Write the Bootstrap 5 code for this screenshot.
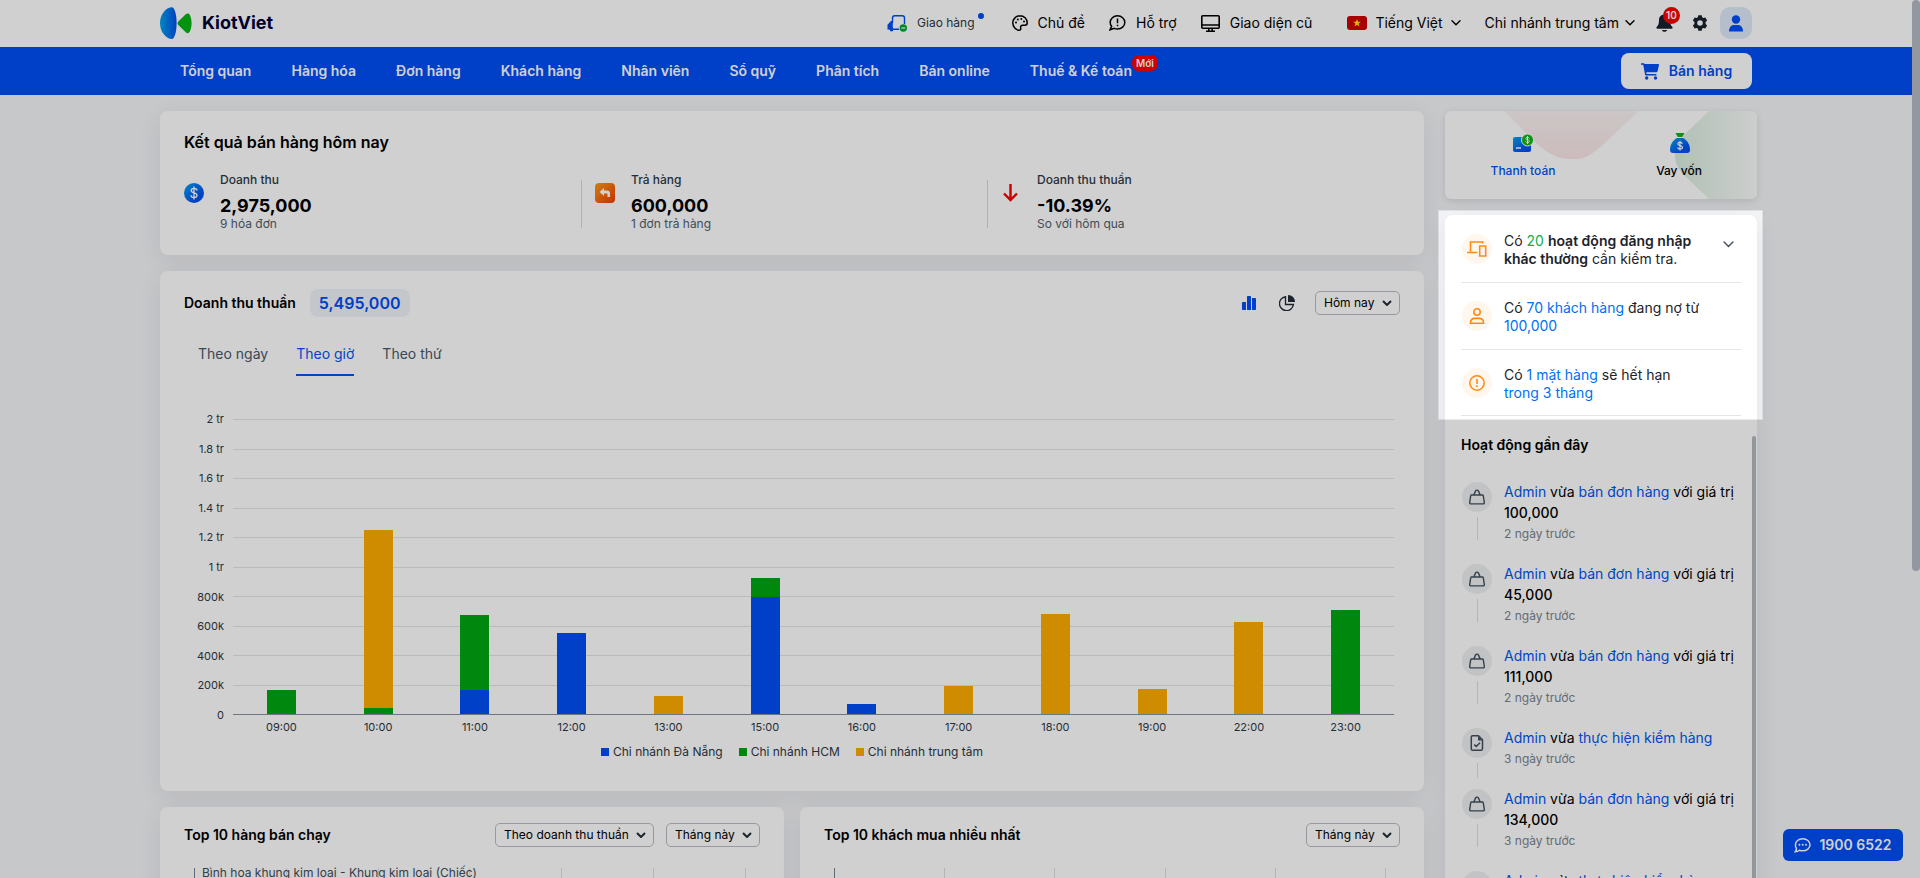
<!DOCTYPE html>
<html lang="vi">
<head>
<meta charset="utf-8">
<meta name="viewport" content="width=device-width, initial-scale=1">
<title>KiotViet - Tổng quan</title>
<link rel="stylesheet" href="https://cdn.jsdelivr.net/npm/bootstrap@5.3.0/dist/css/bootstrap.min.css">
<style>
:root{--kv-blue:#004ef5;--kv-link:#0055f5;--kv-green:#00a612;--kv-amber:#ffac00;--kv-line:#e2e4e6}
html{height:100%}
body{height:100%;overflow:hidden;background:#f4f5f8;color:#000;font-family:Inter,"Noto Sans",sans-serif;font-size:14px;line-height:18px;padding-right:8px}
a{text-decoration:none}
svg{flex:none;display:block}
.shell{max-width:1592px;margin:0 auto}
.topbar{height:47px;background:#fff;margin-right:-8px;padding:0 8px 1px 0}
.brand-link{gap:10px}
.brand-name{font-size:18px;font-weight:700;color:#00003a}
.topbar a.toplink,.topbar button{color:#000;background:none;border:0;padding:0;display:flex;align-items:center;gap:10px;font-size:14px;margin-left:24px}
.topbar a.delivery{font-size:12px;color:#2e3844}
.topbar a.theme{margin-left:37px}
.topbar .lang{margin-left:35px;gap:8px}
.topbar .branch{gap:6px}
.topbar .bell{margin-left:21px}
.topbar .gear{margin-left:19px}
.topbar .avatar-btn{width:32px;height:32px;margin-left:12px;justify-content:center;border-radius:10px;background:#deebfb}
.count{position:absolute;left:7px;top:-7px;width:17px;height:17px;border-radius:50%;background:#fc0000;color:#fff;font-size:10px;font-weight:600;line-height:17px;text-align:center}
.dot{position:absolute;right:-9px;top:-1px;width:6px;height:6px;border-radius:50%;background:var(--kv-blue)}
.mainnav{height:48px;background:var(--kv-blue);margin-right:-8px;padding-right:8px}
.mainnav .nav-link{color:#fff;font-weight:600;padding:0 20px;line-height:48px;position:relative}
.new-tag{position:absolute;right:-6px;top:8px;height:16px;padding:0 4px;border-radius:7px;background:#ff0000;font-size:10px;line-height:16px}
.sell{width:131px;height:36px;gap:10px;background:#fff;color:var(--kv-blue);font-weight:600;font-size:14px;border-radius:8px;border:0}
.columns{gap:21px}
.panel{background:#fff;border-radius:8px;box-shadow:0 6px 24px rgba(20,25,35,.08)}
.summary{padding:20px 24px 27px}
.summary h2{font-size:16px;line-height:22px;margin-bottom:27px}
.revenue{padding:18px 24px 30px}
.side{width:312px;margin-right:-5px;flex:none}
.stats{display:grid;grid-template-columns:397fr 406fr 413fr}
.stat-item{display:flex;gap:16px;height:48px}
.stat-item+.stat-item{border-left:1px solid #d8dadc;padding-left:13px}
.stat-item svg{margin-top:3px}
.stat-item>div{margin-top:-9px}
.stat-item .cap{font-size:12px;font-weight:500;color:#2e3a48}
.stat-item .big{font-size:18px;font-weight:700;line-height:26px;padding-top:4px}
.stat-item .sub{font-size:12px;line-height:10px;color:#505e6c}
h2{font-size:14px;font-weight:600;line-height:18px;margin:0}
.pill{background:#f0f4fb;color:var(--kv-blue);font-size:16px;font-weight:600;line-height:28px;border-radius:8px;padding:0 9px;margin-left:14px}
.pick{appearance:none;height:24px;border:1px solid #b8bcc4;border-radius:5px;font-size:12px;line-height:20px;color:#000;padding:0 24px 0 8px;background:url("data:image/svg+xml,%3Csvg xmlns='http://www.w3.org/2000/svg' width='10' height='6' fill='none' stroke='%23222c38' stroke-width='2'%3E%3Cpath d='M1 1l4 4 4-4'/%3E%3C/svg%3E") no-repeat right 7px center #fff}
.iconbtn{border:0;background:none;padding:0;color:#222c38}
.pie{margin:0 20px 0 23px}
.tabs{display:flex;gap:28px;padding-left:14px;margin-top:27px}
.tabs button{border:0;border-bottom:2px solid transparent;background:none;padding:0 0 10px;line-height:20px;color:#4a5868}
.tabs button.on{color:var(--kv-link);border-color:var(--kv-link)}
.chart{display:grid;grid-template-columns:40px 1fr;column-gap:9px;padding-right:6px;margin-top:35px}
.ylab{height:312px;display:flex;flex-direction:column;justify-content:space-between;text-align:right;font-size:11px;line-height:16px;color:#2e3844}
.plot{display:grid;height:296px;margin-top:8px}
.plot>*{grid-area:1/1}
.rules{display:flex;flex-direction:column;border-bottom:1px solid #8890a0}
.rules i{flex:1;border-top:1px solid var(--kv-line)}
.bars,.xlab{display:flex}
.bars>div{flex:1;display:flex;flex-direction:column;justify-content:flex-end;align-items:center;padding-bottom:1px}
.bars i{width:29px}
.b{background:var(--kv-blue)}.g{background:var(--kv-green)}.o{background:var(--kv-amber)}
.xlab{grid-column:2;font-size:11px;line-height:16px;color:#2e3844;margin-top:-4px}
.xlab span{flex:1;text-align:center}
.legend{font-size:12px;color:#2e3844;gap:16px;margin-top:8px}
.legend i{width:8px;height:8px;margin-right:4px}
.tophead{gap:12px;margin-bottom:21px}
.hplot{height:60px;display:flex;border-left:1px solid #7a828e;margin:0 14px 0 10px}
.hplot i{flex:1;border-right:1px solid #dcdee2}
.hname{position:absolute;left:18px;top:-4px;font-size:12px;color:#414d5a}
.services{height:88px;display:grid;grid-template-columns:1fr 1fr;position:relative;overflow:hidden;box-shadow:0 2px 6px rgba(20,25,35,.12);border-radius:6px}
.services>svg{position:absolute;inset:0;width:100%;height:100%}
.services a{position:relative;display:flex;flex-direction:column;align-items:center;gap:8px;padding-top:21px;font-size:12px;font-weight:500;color:#000}
.services a.on{color:var(--kv-link)}
/* spotlight: dims everything outside the notices */
.notices{position:relative;padding:1px 16px 0}
.notices::after{content:"";position:absolute;inset:-5px -6px -4px -7px;box-shadow:inset 0 0 0 1px rgba(0,0,0,.08),0 0 0 4000px rgba(0,0,0,.184);z-index:2000;pointer-events:none}
.notice{height:67px;border-bottom:1px solid #e3e5e8;display:flex;align-items:center;gap:12px;padding:0 0 0 1px;color:#1d232b}
.notice:last-child{height:66px}
.notice a{color:#0070f4}
.notice .hit{color:#10b04a}
.notice p,.act p{margin:0;flex:1}
.notice p{padding-top:2px}
.notice .iconbtn{padding:25px 7px 0 13px;color:#4a5460}
.ring{width:30px;height:30px;border-radius:50%;display:flex;align-items:center;justify-content:center;flex:none}
.notice .ring{background:#fff6ee;color:#ff8a14}
.recent{padding:20px 16px 0}
.recent h2{margin-bottom:27px}
.act{display:flex;gap:12px;padding-left:1px}
.act p{line-height:21px;padding-bottom:18px}
.act .ring{background:#edeff1;color:#44505e;margin-top:1px}
.act .stem{width:1px;height:23px;background:#dcdee0;margin:5px auto 0}
.act .stem.short{height:15px}
.act a{color:var(--kv-link)}
.act b{font-weight:500}
.act time{display:block;font-size:12px;line-height:22px;color:#7a8490}
.inner-thumb{position:absolute;right:1px;top:221px;bottom:0;width:4px;border-radius:4px;background:#b4bac2}
.page-thumb{position:fixed;right:0;top:0;width:8px;height:65%;border-radius:4px;background:#b4bac4}
.hotline{position:fixed;right:17px;bottom:17px;width:120px;height:32px;border:0;border-radius:6px;background:var(--kv-blue);color:#fff;font-weight:600;font-size:14px}
</style>
</head>
<body>
<svg width="0" height="0" class="position-absolute" aria-hidden="true">
<defs>
<linearGradient id="gb" x1="0" y1="0" x2="1" y2="1"><stop offset="0" stop-color="#0aa5ee"/><stop offset=".7" stop-color="#0052f0"/></linearGradient>
<linearGradient id="gl" x1="0" y1="0" x2="1" y2="0"><stop offset="0" stop-color="#00a5ee"/><stop offset="1" stop-color="#0050ec"/></linearGradient>
<linearGradient id="go" x1="0" y1="0" x2="1" y2="1"><stop offset="0" stop-color="#ff9d1a"/><stop offset="1" stop-color="#f03c00"/></linearGradient>
<linearGradient id="gg" x1="0" y1="0" x2="1" y2="0"><stop offset="0" stop-color="#d9ecdf"/><stop offset="1" stop-color="#fbfdfb"/></linearGradient>
<linearGradient id="gp" x1="0" y1="0" x2="0" y2="1"><stop offset="0" stop-color="#fbf3f3"/><stop offset="1" stop-color="#fae6e8"/></linearGradient>
<symbol id="chev" viewBox="0 0 10 6"><path d="M1 .8l4 4 4-4" fill="none" stroke="currentColor" stroke-width="1.4" stroke-linecap="round"/></symbol>
<symbol id="bag" viewBox="0 0 16 16"><path d="M2.6 6h10.8c.5 0 .8.3.9.8l1 6.600c.1.900-.4 1.500-1.200 1.500H1.900c-.8 0-1.300-.6-1.200-1.500l1-6.600c.1-.5.4-.8.9-.8zM4.800 6 6.500 2.100c.6-1.300 2.400-1.300 3 0L11.200 6" fill="none" stroke="currentColor" stroke-width="1.400"/></symbol>
<symbol id="doc" viewBox="0 0 16 16"><path d="M3.500.8h6l4 4v9c0 .8-.5 1.400-1.300 1.400H3.500c-.8 0-1.200-.5-1.200-1.300V2c0-.7.400-1.200 1.200-1.200zM5.200 9.500l2 2L11 7.800" fill="none" stroke="currentColor" stroke-width="1.500"/><path d="M9 1v4.500h4.500z" fill="currentColor"/></symbol>
</defs></svg>

<header class="topbar">
 <div class="shell h-100 d-flex align-items-center">
  <a href="#" class="brand-link d-flex align-items-center me-auto"><svg width="32" height="32"><path d="M12 .2C14 .2 16.600 6 16.600 16S14 32 12 32C7 32 0 26 0 16S7 .2 12 .2z" fill="url(#gl)"/><path d="M18.300 14.500 25.500 7.500c1.500-1.500 3.300-1.500 4.200.3 2.500 4.500 2.500 12.500 0 17-.9 1.800-2.700 1.800-4.200.2L18.300 18c-1-1-1-2.500 0-3.500z" fill="#05b416"/></svg><span class="brand-name">KiotViet</span></a>
  <a href="#" class="toplink delivery"><svg width="20" height="17" viewBox="0 0 20 17"><path d="M5.500 8V3c0-1.500.8-2.200 2.200-2.200h7.600c1.400 0 2.200.7 2.200 2.200v6M6 14.200h6" fill="none" stroke="#004ef5" stroke-width="1.400"/><path d="M5.800 6H4L.5 9.800V14.500h5.300z" fill="#004ef5"/><circle cx="4.500" cy="14.500" r="1.900" fill="#004ef5"/><circle cx="16.300" cy="13" r="3.700" fill="#00a632"/><path d="M14.300 13h4" stroke="#fff" stroke-width="1.200"/></svg><span class="position-relative">Giao hàng<span class="dot"></span></span></a>
  <a href="#" class="toplink theme"><svg width="16" height="16" viewBox="0 0 16 16"><path d="M8 .8C4 .8.8 4 .8 8S4 15.200 7 15.200c1.500 0 2-1 1.700-2.200-.4-1.600.4-2.700 2-2.700h2.300c1.400 0 2.200-1 2.200-2.500C15.200 3.800 12 .8 8 .8z" fill="none" stroke="#000" stroke-width="1.500"/><circle cx="4" cy="7.500" r="1"/><circle cx="5.800" cy="4.500" r="1"/><circle cx="9.300" cy="4" r="1"/><circle cx="12" cy="6.500" r="1"/></svg>Chủ đề</a>
  <a href="#" class="toplink"><svg width="17" height="16" viewBox="0 0 17 16"><path d="M8.500.8c4 0 7.300 2.900 7.300 6.600 0 3.700-3.300 6.600-7.300 6.600-1.200 0-2.300-.2-3.300-.7L1 14.800l1.600-3.500C1.700 10.200 1.200 8.900 1.200 7.400 1.200 3.700 4.500.8 8.500.8z" fill="none" stroke="#000" stroke-width="1.500"/><path d="M8.500 3.500v4.700M8.500 9.700v1.500" stroke="#000" stroke-width="1.500"/></svg>Hỗ trợ</a>
  <a href="#" class="toplink"><svg width="19" height="17" viewBox="0 0 19 17"><path d="M1.800.8h15.400c.6 0 1 .4 1 1v10.400c0 .6-.4 1-1 1H1.800c-.6 0-1-.4-1-1V1.800c0-.6.4-1 1-1zM1 10h17M7.800 13v3M11.200 13v3M5 16.200h9" fill="none" stroke="#000" stroke-width="1.600"/></svg>Giao diện cũ</a>
  <button type="button" class="lang"><svg width="20" height="14"><rect width="20" height="14" rx="3" fill="#d00000"/><path d="M10 3l1 2.800h2.800l-2.200 1.800.8 2.900L10 8.800l-2.400 1.700.8-2.900-2.200-1.800H9z" fill="#ffe900"/></svg>Tiếng Việt<svg width="10" height="6"><use href="#chev"/></svg></button>
  <button type="button" class="branch">Chi nhánh trung tâm<svg width="10" height="6"><use href="#chev"/></svg></button>
  <button type="button" class="bell position-relative" aria-label="Thông báo"><svg width="17" height="18" viewBox="0 0 17 18"><path d="M8.500.5c3.200 0 5.500 2.200 5.500 5.500 0 4 .8 5.500 2.300 7 .6.7.4 1.700-.8 1.700h-14C.3 14.700 0 13.700.700 13 2.200 11.500 3 10 3 6 3 2.700 5.300.5 8.500.5zM5.800 16h5.400c-.4 1.200-1.500 1.800-2.700 1.800S6.200 17.200 5.800 16z" fill="#18222e"/></svg><span class="count">10</span></button>
  <button type="button" class="gear" aria-label="Thiết lập"><svg width="16" height="16" viewBox="0 0 16 16"><path fill="#18222e" fill-rule="evenodd" d="M6.300.2h3.400l.5 2.100 1.200.7 2-.6 1.700 3L13.600 7v1.900l1.500 1.600-1.700 3-2-.6-1.200.7-.5 2.200H6.300l-.5-2.200-1.200-.7-2 .6-1.700-3L2.400 8.900V7L.9 5.400l1.700-3 2 .6 1.200-.7zM8 5.200a2.800 2.800 0 100 5.600 2.800 2.800 0 000-5.600z"/></svg></button>
  <button type="button" class="avatar-btn" aria-label="Tài khoản"><svg width="14" height="17"><circle cx="7" cy="4.500" r="4.200" fill="#004ef5"/><path d="M0 16.500c0-4 2-6.500 5-6.500h4c3 0 5 2.500 5 6.500z" fill="#004ef5"/></svg></button>
 </div>
</header>
<nav class="mainnav">
 <div class="shell d-flex align-items-center h-100">
  <div class="nav me-auto flex-nowrap">
   <a class="nav-link" href="#">Tổng quan</a><a class="nav-link" href="#">Hàng hóa</a><a class="nav-link" href="#">Đơn hàng</a><a class="nav-link" href="#">Khách hàng</a><a class="nav-link" href="#">Nhân viên</a><a class="nav-link" href="#">Sổ quỹ</a><a class="nav-link" href="#">Phân tích</a><a class="nav-link" href="#">Bán online</a><a class="nav-link" href="#">Thuế &amp; Kế toán<span class="new-tag">Mới</span></a>
  </div>
  <button type="button" class="sell d-flex align-items-center justify-content-center"><svg width="18" height="17" viewBox="0 0 18 17"><path d="M0 .3h2.800c.5 0 .8.300.9.700h13.500c.6 0 .9.400.8 1l-1.500 6.500c-.1.500-.5.800-1 .8H5.300l.3 1.600h9.800v1.500H5c-.5 0-.8-.3-.9-.7L2.200 1.800H0z" fill="#004ef5"/><circle cx="5.700" cy="15" r="1.700" fill="#004ef5"/><circle cx="14.500" cy="15" r="1.700" fill="#004ef5"/></svg>Bán hàng</button>
 </div>
</nav>

<main class="shell columns d-flex align-items-start pt-3">
 <div class="flex-grow-1 d-flex flex-column gap-3">
  <section class="panel summary">
   <h2>Kết quả bán hàng hôm nay</h2>
   <div class="stats">
    <div class="stat-item"><svg width="20" height="20"><circle cx="10" cy="10" r="10" fill="url(#gb)"/><path d="M13 7.500C13 6 11.800 5.300 10 5.300S7.200 6.200 7.200 7.500C7.200 10.500 13 9.200 13 12.300c0 1.500-1.300 2.400-3 2.400s-3-.8-3-2.400M10 3.500v13" fill="none" stroke="#fff" stroke-width="1.300"/></svg><div><div class="cap">Doanh thu</div><div class="big">2,975,000</div><div class="sub">9 hóa đơn</div></div></div>
    <div class="stat-item"><svg width="20" height="20"><rect width="20" height="20" rx="4" fill="url(#go)"/><path d="M4.500 9 9 5v2.500h3c2 0 3 1 3 3V14h-2.500v-2.500c0-.6-.3-1-1-1H9V13z" fill="#fff"/></svg><div><div class="cap">Trả hàng</div><div class="big">600,000</div><div class="sub">1 đơn trả hàng</div></div></div>
    <div class="stat-item"><svg width="20" height="20"><path d="M9.500 1v15.500M3 10.500l6.500 6.500L16 10.500" fill="none" stroke="#f50000" stroke-width="2.400"/></svg><div><div class="cap">Doanh thu thuần</div><div class="big">-10.39%</div><div class="sub">So với hôm qua</div></div></div>
   </div>
  </section>

  <section class="panel revenue">
   <div class="d-flex align-items-center">
    <h2>Doanh thu thuần</h2><span class="pill me-auto">5,495,000</span>
    <button type="button" class="iconbtn" aria-label="Biểu đồ cột"><svg width="14" height="14"><path d="M0 7.200C0 6.500.4 6 1 6h3v8H1c-.6 0-1-.4-1-1zM5 1c0-.6.400-1 1-1h2c.6 0 1 .4 1 1v13H5zM10 2h3c.6 0 1 .4 1 1v10c0 .6-.4 1-1 1h-3z" fill="#004ef5"/></svg></button>
    <button type="button" class="iconbtn pie" aria-label="Biểu đồ tròn"><svg width="16" height="16"><path d="M9 0c4 0 7 3 7 7H9z" fill="#222c38"/><path d="M6.500 1.700v7.800h7.900a7 7 0 11-7.900-7.800z" fill="none" stroke="#222c38" stroke-width="1.400"/></svg></button>
    <select class="pick" aria-label="Khoảng thời gian"><option>Hôm nay</option></select>
   </div>
   <div class="tabs"><button type="button">Theo ngày</button><button type="button" class="on">Theo giờ</button><button type="button">Theo thứ</button></div>
   <div class="chart">
    <div class="ylab"><span>2 tr</span><span>1.8 tr</span><span>1.6 tr</span><span>1.4 tr</span><span>1.2 tr</span><span>1 tr</span><span>800k</span><span>600k</span><span>400k</span><span>200k</span><span>0</span></div>
    <div class="plot">
     <div class="rules"><i></i><i></i><i></i><i></i><i></i><i></i><i></i><i></i><i></i><i></i></div>
     <div class="bars">
      <div><i class="g" style="height:8.1%"></i></div>
      <div><i class="o" style="height:60.5%"></i><i class="g" style="height:2%"></i></div>
      <div><i class="g" style="height:25.3%"></i><i class="b" style="height:8.1%"></i></div>
      <div><i class="b" style="height:27.4%"></i></div>
      <div><i class="o" style="height:6.1%"></i></div>
      <div><i class="g" style="height:6.2%"></i><i class="b" style="height:39.8%"></i></div>
      <div><i class="b" style="height:3.4%"></i></div>
      <div><i class="o" style="height:9.5%"></i></div>
      <div><i class="o" style="height:33.8%"></i></div>
      <div><i class="o" style="height:8.4%"></i></div>
      <div><i class="o" style="height:31.1%"></i></div>
      <div><i class="g" style="height:35.1%"></i></div>
     </div>
    </div>
    <div class="xlab"><span>09:00</span><span>10:00</span><span>11:00</span><span>12:00</span><span>13:00</span><span>15:00</span><span>16:00</span><span>17:00</span><span>18:00</span><span>19:00</span><span>22:00</span><span>23:00</span></div>
   </div>
   <div class="legend d-flex justify-content-center"><span class="d-flex align-items-center"><i class="b"></i>Chi nhánh Đà Nẵng</span><span class="d-flex align-items-center"><i class="g"></i>Chi nhánh HCM</span><span class="d-flex align-items-center"><i class="o"></i>Chi nhánh trung tâm</span></div>
  </section>

  <div class="row gx-3">
   <div class="col-6"><section class="panel px-4 pt-3">
    <div class="tophead d-flex align-items-center"><h2 class="me-auto">Top 10 hàng bán chạy</h2><select class="pick" aria-label="Tiêu chí"><option>Theo doanh thu thuần</option></select><select class="pick" aria-label="Kỳ hàng bán"><option>Tháng này</option></select></div>
    <div class="position-relative"><div class="hplot"><i></i><i></i><i></i><i></i><i></i><i></i></div><span class="hname">Bình hoa khung kim loại - Khung kim loại (Chiếc)</span></div>
   </section></div>
   <div class="col-6"><section class="panel px-4 pt-3">
    <div class="tophead d-flex align-items-center"><h2 class="me-auto">Top 10 khách mua nhiều nhất</h2><select class="pick" aria-label="Kỳ khách mua"><option>Tháng này</option></select></div>
    <div class="hplot"><i></i><i></i><i></i><i></i><i></i></div>
   </section></div>
  </div>
 </div>

 <aside class="side d-flex flex-column gap-3">
  <section class="panel services">
   <svg viewBox="0 0 312 88" preserveAspectRatio="none" aria-hidden="true"><path d="M59 0h135l-30 28c-22 22-30 20-37 20s-20 0-38-18z" fill="url(#gp)"/><path d="M264 0h48v88h-48l-25-24c-12-12-12-28 0-40z" fill="url(#gg)"/></svg>
   <a href="#" class="on"><svg width="22" height="22" viewBox="0 0 22 22"><path d="M3 5h11a5 5 0 005 5v8c0 1.200-.7 2-2 2H3c-1.200 0-2-.8-2-2V7c0-1.200.8-2 2-2z" fill="url(#gb)"/><circle cx="15.500" cy="8" r="6" fill="#10b418" stroke="#fff"/><path d="M17.300 6.500c-.3-1.500-3.500-1.400-3.500.1 0 1.700 3.700 1 3.700 2.800 0 1.600-3.600 1.700-3.900 0M15.500 4v8" fill="none" stroke="#fff"/><path d="M4 16h5" stroke="#fff" stroke-width="1.500"/></svg>Thanh toán</a>
   <a href="#"><svg width="22" height="22" viewBox="-1 0 22 22"><path d="M6.500 1h9l-2.300 4H8.800z" fill="#10b418"/><path d="M8 6h6c4 2 7 6.500 7 12 0 2-1 3-3 3H4c-2 0-3-1-3-3C1 12.500 4 8 8 6z" fill="url(#gb)"/><path d="M13.300 11.800c-.4-2-4.500-1.900-4.500.2 0 2.200 4.700 1.200 4.700 3.500 0 2.100-4.600 2.100-4.900-.2M11 8.800v9.700" fill="none" stroke="#fff" stroke-width="1.200"/></svg>Vay vốn</a>
  </section>

  <section class="panel position-relative">
   <div class="notices">
    <div class="notice"><span class="ring"><svg width="20" height="16" viewBox="0 0 20 16"><path d="M15.800 2.500V1H3.500v9.500M0 11.500h10.500M12.700 5h6v10h-6z" fill="none" stroke="currentColor" stroke-width="1.600"/></svg></span><p>Có <span class="hit">20</span> <span class="fw-semibold">hoạt động đăng nhập khác thường</span> cần kiểm tra.</p><button type="button" class="iconbtn align-self-start" aria-label="Mở rộng"><svg width="11" height="7"><use href="#chev"/></svg></button></div>
    <div class="notice"><span class="ring"><svg width="16" height="16" viewBox="0 0 16 16"><circle cx="8" cy="4" r="3.200" fill="none" stroke="currentColor" stroke-width="1.600"/><path d="M1.400 15.200c0-3 2-4.800 4.600-4.800h4c2.600 0 4.600 1.800 4.600 4.800z" fill="none" stroke="currentColor" stroke-width="1.600"/></svg></span><p>Có <a href="#">70 khách hàng</a> đang nợ từ<br><a href="#">100,000</a></p></div>
    <div class="notice"><span class="ring"><svg width="16" height="16" viewBox="0 0 16 16"><circle cx="8" cy="8" r="7.200" fill="none" stroke="currentColor" stroke-width="1.500"/><path d="M8 4v5M8 10.300v1.600" stroke="currentColor" stroke-width="1.600"/></svg></span><p>Có <a href="#">1 mặt hàng</a> sẽ hết hạn<br><a href="#">trong 3 tháng</a></p></div>
   </div>
   <div class="recent">
    <h2>Hoạt động gần đây</h2>
    <div class="act"><div><span class="ring"><svg width="16" height="16"><use href="#bag"/></svg></span><div class="stem"></div></div><p><a href="#">Admin</a> vừa <a href="#">bán đơn hàng</a> với giá trị <b>100,000</b><time>2 ngày trước</time></p></div>
    <div class="act"><div><span class="ring"><svg width="16" height="16"><use href="#bag"/></svg></span><div class="stem"></div></div><p><a href="#">Admin</a> vừa <a href="#">bán đơn hàng</a> với giá trị <b>45,000</b><time>2 ngày trước</time></p></div>
    <div class="act"><div><span class="ring"><svg width="16" height="16"><use href="#bag"/></svg></span><div class="stem"></div></div><p><a href="#">Admin</a> vừa <a href="#">bán đơn hàng</a> với giá trị <b>111,000</b><time>2 ngày trước</time></p></div>
    <div class="act"><div><span class="ring"><svg width="16" height="16"><use href="#doc"/></svg></span><div class="stem short"></div></div><p><a href="#">Admin</a> vừa <a href="#">thực hiện kiểm hàng</a><time>3 ngày trước</time></p></div>
    <div class="act"><div><span class="ring"><svg width="16" height="16"><use href="#bag"/></svg></span><div class="stem"></div></div><p><a href="#">Admin</a> vừa <a href="#">bán đơn hàng</a> với giá trị <b>134,000</b><time>3 ngày trước</time></p></div>
    <div class="act"><div><span class="ring"><svg width="16" height="16"><use href="#doc"/></svg></span><div class="stem short"></div></div><p><a href="#">Admin</a> vừa <a href="#">thực hiện kiểm hàng</a><time>3 ngày trước</time></p></div>
   </div>
   <div class="inner-thumb"></div>
  </section>
 </aside>
</main>

<button type="button" class="hotline d-flex align-items-center justify-content-center gap-2 p-0"><svg width="17" height="15" viewBox="0 0 17 15"><path d="M8.700.8c4.100 0 7.300 2.600 7.300 6s-3.200 6-7.300 6c-1.200 0-2.200-.2-3.200-.6-1 1-2.500 1.600-4.300 1.600.8-.9 1.300-1.900 1.300-3-.7-1.100-1.100-2.500-1.100-4 0-3.400 3.200-6 7.300-6z" fill="none" stroke="#fff" stroke-width="1.500"/><circle cx="5.400" cy="6.800" r="1" fill="#fff"/><circle cx="8.700" cy="6.800" r="1" fill="#fff"/><circle cx="12" cy="6.800" r="1" fill="#fff"/></svg>1900 6522</button>
<div class="page-thumb"></div>
<script src="https://cdn.jsdelivr.net/npm/bootstrap@5.3.0/dist/js/bootstrap.bundle.min.js"></script>
</body>
</html>
